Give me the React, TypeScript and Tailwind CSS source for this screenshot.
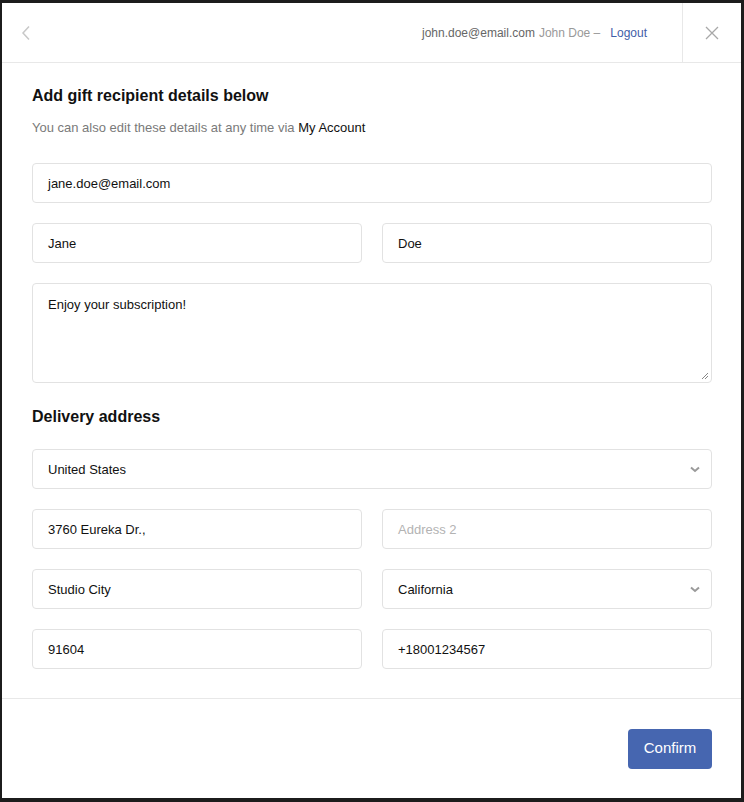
import React from "react";

const font = { fontFamily: '"Liberation Sans", Arial, Helvetica, sans-serif' };

function Field({ value, placeholder }: { value?: string; placeholder?: string }) {
  return (
    <div className="flex h-10 items-center rounded border border-[#e2e2e2] bg-white px-[15px] pt-[1px] text-[13px]">
      {value ? (
        <span className="text-[#111]">{value}</span>
      ) : (
        <span className="text-[#b3b3b3]">{placeholder}</span>
      )}
    </div>
  );
}

function Select({ value }: { value: string }) {
  return (
    <div className="flex h-10 items-center justify-between rounded border border-[#e2e2e2] bg-white pl-[15px] pr-[11px] pt-[1px] text-[13px]">
      <span className="text-[#111]">{value}</span>
      <svg width="10" height="7" viewBox="0 0 10 7">
        <path d="M1 1.5 L5 5 L9 1.5" fill="none" stroke="#9a9a9a" strokeWidth="2" />
      </svg>
    </div>
  );
}

export default function App() {
  return (
    <div className="min-h-[802px] bg-[#1c1c1c] pl-[2px] pt-[3px]" style={font}>
      <div className="flex h-[795px] w-[739px] flex-col bg-white">
        <div className="flex h-[60px] items-center border-b border-[#e8e8e8]">
          <div className="flex w-[48px] justify-center">
            <svg width="10" height="16" viewBox="0 0 10 16">
              <path d="M8 1.5 L2 8 L8 14.5" fill="none" stroke="#c8c8c8" strokeWidth="1.5" />
            </svg>
          </div>
          <div className="flex flex-1 items-center justify-end pr-[35px] text-[12px]">
            <span className="text-[#666]">john.doe@email.com</span>
            <span className="ml-1 text-[#999]">John Doe –</span>
            <span className="ml-[10px] text-[#3f5ea8]">Logout</span>
          </div>
          <div className="flex h-full w-[59px] items-center justify-center border-l border-[#e8e8e8]">
            <svg width="14" height="14" viewBox="0 0 14 14">
              <path d="M1 1 L13 13 M13 1 L1 13" stroke="#a8a8a8" strokeWidth="1.3" />
            </svg>
          </div>
        </div>

        <div className="flex-1 pl-[30px] pr-[29px] pt-[21px]">
          <h1 className="text-[16px] font-bold leading-6 text-[#111]">Add gift recipient details below</h1>
          <p className="mt-[10px] text-[13px] leading-5 text-[#7a7a7a]">
            You can also edit these details at any time via <span className="text-[#111]">My Account</span>
          </p>

          <div className="mt-[25px] flex flex-col gap-5">
            <Field value="jane.doe@email.com" />
            <div className="grid grid-cols-2 gap-5">
              <Field value="Jane" />
              <Field value="Doe" />
            </div>
            <div className="relative h-[100px] rounded border border-[#e2e2e2] px-[15px] pt-[11px] text-[13px] text-[#111]">
              Enjoy your subscription!
              <svg className="absolute bottom-[2px] right-[2px]" width="8" height="8" viewBox="0 0 8 8">
                <path d="M7 1 L1 7 M7 4 L4 7" stroke="#888" strokeWidth="1" />
              </svg>
            </div>
          </div>

          <h2 className="mt-[22px] text-[16px] font-bold leading-6 text-[#111]">Delivery address</h2>

          <div className="mt-[20px] flex flex-col gap-5">
            <Select value="United States" />
            <div className="grid grid-cols-2 gap-5">
              <Field value="3760 Eureka Dr.," />
              <Field placeholder="Address 2" />
            </div>
            <div className="grid grid-cols-2 gap-5">
              <Field value="Studio City" />
              <Select value="California" />
            </div>
            <div className="grid grid-cols-2 gap-5">
              <Field value="91604" />
              <Field value="+18001234567" />
            </div>
          </div>
        </div>

        <div className="flex h-[100px] items-center justify-end border-t border-[#e8e8e8] pl-[30px] pr-[29px]">
          <button className="h-10 w-[84px] rounded bg-[#4666b0] text-[15px] text-white">Confirm</button>
        </div>
      </div>
    </div>
  );
}
